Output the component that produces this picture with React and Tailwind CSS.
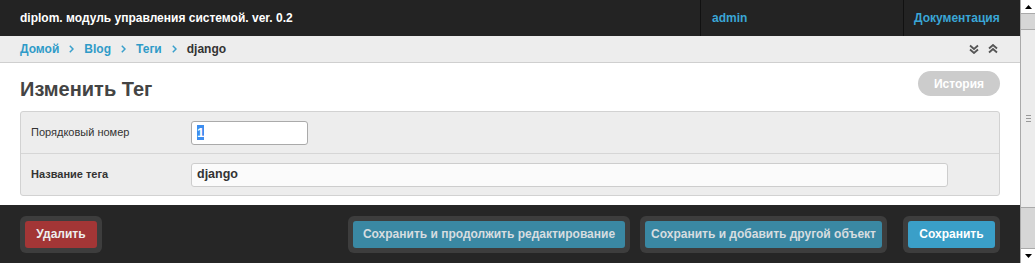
import React from "react";

function DoubleDown() {
  return (
    <svg width="10" height="10" viewBox="0 0 10 10" fill="none" stroke="#555" strokeWidth="1.8">
      <path d="M1 1.5 L5 5 L9 1.5" />
      <path d="M1 5.5 L5 9 L9 5.5" />
    </svg>
  );
}
function DoubleUp() {
  return (
    <svg width="10" height="10" viewBox="0 0 10 10" fill="none" stroke="#555" strokeWidth="1.8">
      <path d="M1 4.5 L5 1 L9 4.5" />
      <path d="M1 8.5 L5 5 L9 8.5" />
    </svg>
  );
}

function Sep() {
  return (
    <span className="mx-[10px] flex items-center">
      <svg width="5" height="8" viewBox="0 0 5 8" fill="none" stroke="#3aa0cc" strokeWidth="1.5">
        <path d="M0.8 0.8 L4 4 L0.8 7.2" />
      </svg>
    </span>
  );
}

function Scrollbar() {
  return (
    <div className="w-[15px] h-full flex flex-col bg-[#e3e3e3] border-l border-[#aaa]">
      <div className="h-[14px] bg-white border-b border-[#aaa] flex items-center justify-center">
        <svg width="7" height="4" viewBox="0 0 7 4"><path d="M0 4 L3.5 0 L7 4 Z" fill="#000" /></svg>
      </div>
      <div className="h-[16px] bg-[#d6d6d6] border-b border-[#aaa]" />
      <div className="flex-1 bg-[#ececec] border-b border-[#aaa] flex flex-col items-center justify-center gap-[2px]">
        <div className="w-[5px] h-px bg-[#999]" />
        <div className="w-[5px] h-px bg-[#999]" />
        <div className="w-[5px] h-px bg-[#999]" />
      </div>
      <div className="h-[41px] bg-[#d6d6d6] border-b border-[#aaa]" />
      <div className="h-[14px] bg-white flex items-center justify-center">
        <svg width="7" height="4" viewBox="0 0 7 4"><path d="M0 0 L3.5 4 L7 0 Z" fill="#000" /></svg>
      </div>
    </div>
  );
}

function BtnWrap({ children }) {
  return <div className="p-[5px] bg-[#3d3d3d] rounded-[6px]">{children}</div>;
}

export default function App() {
  return (
    <div
      className="w-[1035px] h-[263px] flex overflow-hidden bg-white"
      style={{ fontFamily: '"Liberation Sans", Arial, sans-serif' }}
    >
      <div className="flex-1 flex flex-col min-w-0">
        {/* header */}
        <div className="h-[36px] bg-[#232323] flex items-stretch">
          <div className="flex-1 flex items-center pl-[20px] text-white font-bold text-[12px]">
            diplom. модуль управления системой. ver. 0.2
          </div>
          <div className="w-[203px] border-l border-[#111] flex items-center pl-[11px] text-[#3aa6d6] font-bold text-[12px]">
            admin
          </div>
          <div className="w-[117px] border-l border-[#111] flex items-center pl-[10px] text-[#3aa6d6] font-bold text-[12px]">
            Документация
          </div>
        </div>
        {/* breadcrumbs */}
        <div className="h-[27px] bg-[#ededed] border-b border-[#cfcfcf] flex items-center pl-[20px] pr-[22px] text-[12px] font-bold">
          <span className="text-[#2f9bc8]">Домой</span>
          <Sep />
          <span className="text-[#2f9bc8]">Blog</span>
          <Sep />
          <span className="text-[#2f9bc8]">Теги</span>
          <Sep />
          <span className="text-[#333]">django</span>
          <div className="flex-1" />
          <div className="flex items-center gap-[9px]">
            <DoubleDown />
            <DoubleUp />
          </div>
        </div>
        {/* content */}
        <div className="flex-1 px-[20px]">
          <div className="flex items-start justify-between pt-[8px]">
            <h1 className="text-[20px] font-bold text-[#444] mt-[6px] leading-[24px]">Изменить Тег</h1>
            <div className="h-[25px] w-[82px] rounded-full bg-[#cccccc] text-white font-bold text-[12px] flex items-center justify-center">
              История
            </div>
          </div>
          <div className="mt-[10px] bg-[#ededed] border border-[#d2d2d2] rounded-[3px]">
            <div className="h-[42px] flex items-center border-b border-[#d6d6d6]">
              <div className="w-[170px] pl-[10px] text-[11px] text-[#333]">Порядковый номер</div>
              <div className="w-[117px] h-[24px] bg-white border border-[#aaa] rounded-[3px] flex items-center pl-[5px] text-[13px] font-bold">
                <span className="bg-[#3d8ef0] text-white leading-[15px]">1</span>
              </div>
            </div>
            <div className="h-[41px] flex items-center">
              <div className="w-[170px] pl-[10px] text-[11px] font-bold text-[#333]">Название тега</div>
              <div className="w-[757px] h-[24px] bg-[#fbfbfb] border border-[#cdcdcd] rounded-[3px] flex items-center pl-[5px] text-[12.5px] font-bold text-[#333]">
                django
              </div>
            </div>
          </div>
        </div>
        {/* footer */}
        <div className="h-[58px] bg-[#262626] flex items-center px-[20px]">
          <BtnWrap>
            <div className="h-[27px] w-[72px] rounded-[3px] bg-[#a33636] text-[#eee] font-bold text-[12px] flex items-center justify-center">
              Удалить
            </div>
          </BtnWrap>
          <div className="flex-1" />
          <BtnWrap>
            <div className="h-[27px] w-[272px] rounded-[3px] bg-[#3a88a3] text-[#d6dde0] font-bold text-[12px] flex items-center justify-center">
              Сохранить и продолжить редактирование
            </div>
          </BtnWrap>
          <div className="w-[10px]" />
          <BtnWrap>
            <div className="h-[27px] w-[237px] rounded-[3px] bg-[#3a88a3] text-[#d6dde0] font-bold text-[12px] flex items-center justify-center">
              Сохранить и добавить другой объект
            </div>
          </BtnWrap>
          <div className="w-[16px]" />
          <BtnWrap>
            <div className="h-[27px] w-[87px] rounded-[3px] bg-[#3a9fc8] text-white font-bold text-[12px] flex items-center justify-center">
              Сохранить
            </div>
          </BtnWrap>
        </div>
      </div>
      <Scrollbar />
    </div>
  );
}
